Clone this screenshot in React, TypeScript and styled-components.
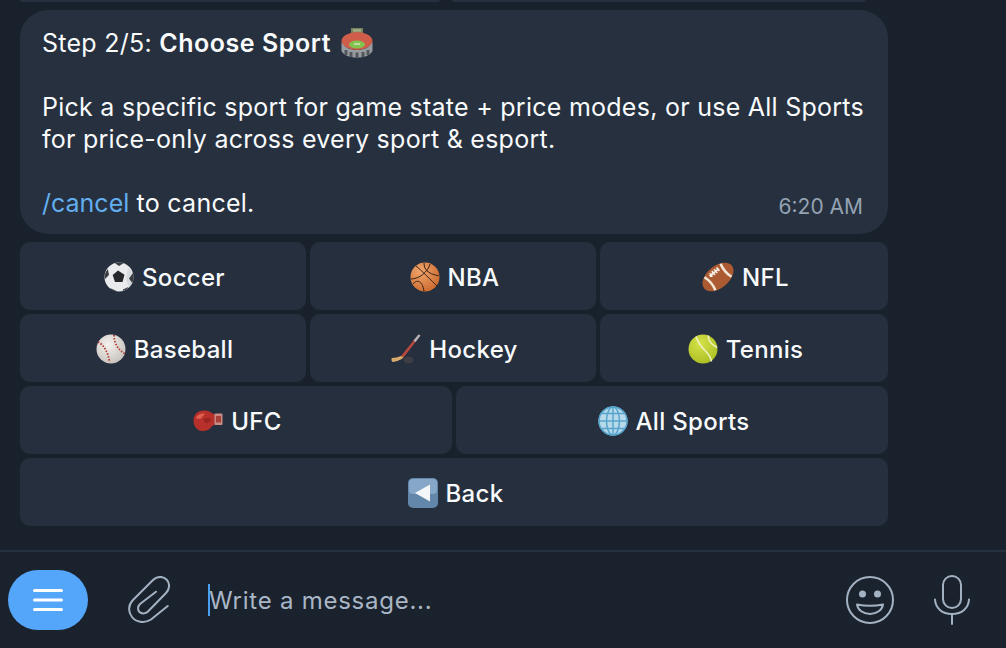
import React from "react";
import styled, { createGlobalStyle } from "styled-components";

const Global = createGlobalStyle`
  html, body { margin: 0; padding: 0; background: #19212c; }
  body { width: 1006px; height: 648px; overflow: hidden; font-family: Inter, "Liberation Sans", sans-serif; }
`;

const Page = styled.div`
  width: 1006px; height: 648px; display: flex; flex-direction: column; background: #19212c; overflow: hidden;
`;
const Chat = styled.div`
  flex: none; width: 868px; margin-left: 20px; height: 550px; display: flex; flex-direction: column; gap: 4px;
`;
const PrevKeys = styled.div`
  height: 2px; display: grid; grid-template-columns: 420px 414px; gap: 12px; margin-bottom: 4px;
`;
const PrevKey = styled.div`
  background: #252f3d; border-radius: 0 0 8px 8px;
`;
const Bubble = styled.div`
  height: 224px; box-sizing: border-box; background: #26303e; border-radius: 28px; padding: 17px 22px 0;
  color: #f8fafc; font-size: 25px; line-height: 32px; letter-spacing: 0.26px; position: relative; margin-bottom: 4px;
`;
const Para = styled.p`
  margin: 0 0 32px; white-space: nowrap;
  &:last-of-type { margin-bottom: 0; }
`;
const Strong = styled.b` font-weight: 600; letter-spacing: 0.55px; `;
const Link = styled.span` color: #62aeee; letter-spacing: 0; `;
const Time = styled.span`
  position: absolute; right: 25px; bottom: 15px; font-size: 21px; line-height: 24px; letter-spacing: 0; color: #94a2b2;
`;
const Row = styled.div<{ $cols: string }>`
  display: grid; grid-template-columns: ${(p) => p.$cols}; gap: 4px; height: 68px;
`;
const Key = styled.div`
  background: #252f3d; border-radius: 10px; display: flex; align-items: center; justify-content: center; gap: 8px;
  color: #f8fafc; font-size: 24px; font-weight: 500; letter-spacing: 0.3px; padding: 2px 0 0 3px; box-sizing: border-box;
`;
const Composer = styled.div`
  flex: none; height: 96px; border-top: 2px solid #263140; background: #1a222d; display: flex; align-items: center; padding-left: 8px;
`;
const MenuBtn = styled.div`
  width: 80px; height: 60px; border-radius: 30px; background: #54a6fb; display: flex; align-items: center; justify-content: center;
`;
const AttachSlot = styled.div`
  width: 120px; box-sizing: border-box; padding-left: 2px; display: flex; justify-content: center; align-items: center;
`;
const Caret = styled.div`
  width: 2px; height: 32px; background: #4a9ef0;
`;
const Placeholder = styled.div`
  flex: 1; font-size: 24px; letter-spacing: 0.75px; color: #a9b6c6; line-height: 32px; margin-left: -1px; padding-top: 2px;
`;
const Tools = styled.div`
  display: flex; align-items: center; gap: 40px; margin-right: 36px;
`;
const EmojiSvg = styled.svg` flex: none; display: block; `;
const InlineEmoji = styled(EmojiSvg)` display: inline-block; vertical-align: -6px; margin-left: 10px; `;

const Soccer = () => (
  <EmojiSvg width="30" height="30" viewBox="0 0 30 30">
    <circle cx="15" cy="15" r="14.500" fill="#e9ebed" />
    <path d="M24 6a14 14 0 0 1 5.500 9 14 14 0 0 1-4.500 10l-3-7z" fill="#b9bdc2" opacity=".35" />
    <path d="M14 8.500l6.500 4.200-2 7.300h-7.500l-2.300-7z" fill="#25272b" />
    <path d="M11 1.200c3-.8 6-.8 8.500 0L15 4zM1 17c-.8-3 .2-7 2.800-10l1.200 6zM29 11c1 3 .8 7-.8 10L25 16.500zM7 26.500l6 2.800c-2.500 0-5-.5-7-2zM19 27.500l5.800-2.800c-1.500 2-3.500 3.600-6 4.300z" fill="#3a3c41" />
  </EmojiSvg>
);
const Basketball = () => (
  <EmojiSvg width="30" height="30" viewBox="0 0 30 30">
    <defs>
      <radialGradient id="bb" cx=".35" cy=".3" r=".8"><stop offset="0" stopColor="#f0a56c" /><stop offset="1" stopColor="#c9672c" /></radialGradient>
    </defs>
    <circle cx="15" cy="15" r="14.500" fill="url(#bb)" />
    <g fill="none" stroke="#3a2418" strokeWidth="1">
      <path d="M1 17C9 17 18 10 20 2M6 4c5 4 17 16 21 20M14 .8c0 6 3 11 15 13M3 22c3-4 9-5 11 7" />
    </g>
  </EmojiSvg>
);
const Football = () => (
  <EmojiSvg width="32" height="30" viewBox="0 0 32 30">
    <g transform="rotate(-40 16 15)">
      <ellipse cx="16" cy="15" rx="18" ry="11" fill="#ab5a32" />
      <path d="M5.500 6.500c1.600 5 1.600 12 0 17" stroke="#f2e6d6" strokeWidth="2.600" fill="none" />
      <path d="M26.500 6.500c-1.600 5-1.600 12 0 17" stroke="#f2e6d6" strokeWidth="2.600" fill="none" />
      <path d="M10 9h12M12 6.800v4.400M15 6.500v5M18 6.500v5M21 6.800v4.400" stroke="#f5efe6" strokeWidth="1.700" fill="none" />
    </g>
  </EmojiSvg>
);
const Baseball = () => (
  <EmojiSvg width="30" height="30" viewBox="0 0 30 30">
    <defs>
      <radialGradient id="base" cx=".4" cy=".35" r=".8"><stop offset="0" stopColor="#f4f2ef" /><stop offset="1" stopColor="#bfb9b2" /></radialGradient>
    </defs>
    <circle cx="15" cy="15" r="14.500" fill="url(#base)" />
    <path d="M2 8c6 3 10 10 11.500 20M18 1c0 8 4 15 11.500 19" fill="none" stroke="#b33a32" strokeWidth="1.800" strokeDasharray="1.500 1.500" />
  </EmojiSvg>
);
const Hockey = () => (
  <EmojiSvg width="30" height="30" viewBox="0 0 30 30">
    <path d="M27.500 .5L29.500 1.500 12.500 23.500l-2.500-1.500z" fill="#b9473f" />
    <path d="M27.500 .5L29.500 1.500 24.500 8l-2-1.500z" fill="#b3b7bc" />
    <path d="M1 24c3 0 6-1 9-2l2.500 1.500c-2 2-6.500 4-10.500 4.500-1.500 0-2-3.500-1-4z" fill="#d8ab6c" />
    <ellipse cx="17.500" cy="26" rx="5" ry="3.500" fill="#3b3e44" />
  </EmojiSvg>
);
const Tennis = () => (
  <EmojiSvg width="30" height="30" viewBox="0 0 30 30">
    <defs>
      <radialGradient id="tn" cx=".4" cy=".3" r=".8"><stop offset="0" stopColor="#d6e24a" /><stop offset="1" stopColor="#a7bc1f" /></radialGradient>
    </defs>
    <circle cx="15" cy="15" r="14.500" fill="url(#tn)" />
    <path d="M8 2.500c2 7 6 11 9 14s6 7 6.500 11M20.500 1.500c-1 3 1 8 8.500 12" fill="none" stroke="#eef0c0" strokeWidth="1.600" />
  </EmojiSvg>
);
const Glove = () => (
  <EmojiSvg width="30" height="22" viewBox="0 0 30 22">
    <path d="M.5 10.500C.5 4.500 5 .5 11 .5c3 0 5 .5 7 2 1.500 1 3 1.500 4 2v10c-1.500.5-3 1.500-4 3-2 2.500-5 4-9 3.500C4 20.500.5 16 .5 10.500z" fill="#b8302c" />
    <path d="M3 8c1-3 5-5 9-4.500-1 2-3 3-4 5-1.500.5-3.500.5-5-.5z" fill="#e0604f" />
    <path d="M11 9c2-1.500 5-1.500 7 .5-1 2.500-3 4-5 3.500-2-.5-3-3-2-4z" fill="#8f1f1f" opacity=".7" />
    <rect x="21.500" y="3.500" width="8" height="11.500" rx="1" fill="#c98a84" />
    <rect x="23" y="6" width="5" height="6.500" fill="#a8403a" />
  </EmojiSvg>
);
const Globe = () => (
  <EmojiSvg width="30" height="30" viewBox="0 0 30 30">
    <circle cx="15" cy="15" r="14.500" fill="#b7d9ea" />
    <g fill="none" stroke="#57a5cd" strokeWidth="1.500">
      <circle cx="15" cy="15" r="14" />
      <ellipse cx="15" cy="15" rx="6.500" ry="14" />
      <path d="M15 1v28M1 15h28M3.500 7.500h23M3.500 22.500h23" />
    </g>
  </EmojiSvg>
);
const BackIcon = () => (
  <EmojiSvg width="30" height="30" viewBox="0 0 30 30">
    <rect width="30" height="30" rx="5" fill="#6387ab" />
    <rect x="1" y="1" width="28" height="15" rx="4" fill="#86a7c7" />
    <path d="M22 6.500v17L7 15z" fill="#f4f6f8" />
  </EmojiSvg>
);
const Stadium = () => (
  <InlineEmoji width="32" height="30" viewBox="0 0 32 30">
    <rect x="10" y="0" width="12" height="5" fill="#77825f" />
    <rect x="12" y="1.200" width="8" height="2.500" fill="#a3ad85" />
    <path d="M3 8c6-4 20-4 26 0v3H3z" fill="#3c4a5e" />
    <ellipse cx="16" cy="13" rx="15.500" ry="9" fill="#cf5d49" />
    <ellipse cx="16" cy="16.500" rx="8" ry="4" fill="#83c44f" />
    <path d="M13 16h6" stroke="#e6f0d8" strokeWidth="1.200" />
    <path d="M.5 14c3 6 9 8 15.500 8s12.500-2 15.500-8v9c-3 5-9 6.500-15.500 6.500S3.500 28 .5 23z" fill="#989ca0" />
    <path d="M5 22v5M10 24v5M16 24.500v5M22 24v5M27 22v5" stroke="#53575c" strokeWidth="3" />
  </InlineEmoji>
);

export default function App() {
  return (
    <Page>
      <Global />
      <Chat>
        <PrevKeys><PrevKey /><PrevKey /></PrevKeys>
        <Bubble>
          <Para>Step 2/5: <Strong>Choose Sport</Strong><Stadium /></Para>
          <Para>Pick a specific sport for game state + price modes, or use All Sports<br />for price-only across every sport &amp; esport.</Para>
          <Para><Link>/cancel</Link> to cancel.</Para>
          <Time>6:20 AM</Time>
        </Bubble>
        <Row $cols="286px 286px 288px">
          <Key><Soccer />Soccer</Key>
          <Key><Basketball />NBA</Key>
          <Key><Football />NFL</Key>
        </Row>
        <Row $cols="286px 286px 288px">
          <Key><Baseball />Baseball</Key>
          <Key><Hockey />Hockey</Key>
          <Key><Tennis />Tennis</Key>
        </Row>
        <Row $cols="432px 432px">
          <Key><Glove />UFC</Key>
          <Key><Globe />All Sports</Key>
        </Row>
        <Row $cols="1fr">
          <Key><BackIcon />Back</Key>
        </Row>
      </Chat>
      <Composer>
        <MenuBtn>
          <svg width="30" height="24" viewBox="0 0 30 24" fill="none" stroke="#fff" strokeWidth="3" strokeLinecap="round">
            <path d="M1.500 2.500h27M1.500 12h27M1.500 21.500h27" />
          </svg>
        </MenuBtn>
        <AttachSlot>
          <svg width="42" height="48" viewBox="0 0 42 48" fill="none" stroke="#a3b2c3" strokeWidth="2" strokeLinecap="round" strokeLinejoin="round">
            <path d="M39.700 30L23 43.500C16 48 8 46 4 41 0 36 0 29 5 24L25 4C29 0 35 0 38.500 3.500 42 7 42 13 38 17L20 35.500C17.500 38 13.500 38 11.500 36 9.500 34 9.500 30.500 12 28L28 15.700" />
          </svg>
        </AttachSlot>
        <Caret />
        <Placeholder>Write a message...</Placeholder>
        <Tools>
          <svg width="48" height="48" viewBox="0 0 48 48" fill="none" stroke="#a3b2c3" strokeWidth="2">
            <circle cx="24" cy="24" r="23" />
            <circle cx="16.500" cy="18" r="3.500" fill="#a3b2c3" stroke="none" />
            <circle cx="31.500" cy="18" r="3.500" fill="#a3b2c3" stroke="none" />
            <path d="M11 28.500c8 1.500 18 1.500 26 0-1 5.500-6 9.500-13 9.500s-12-4-13-9.500z" strokeLinejoin="round" />
          </svg>
          <svg width="36" height="50" viewBox="0 0 36 50" fill="none" stroke="#a3b2c3" strokeWidth="2" strokeLinecap="round">
            <rect x="9" y="1" width="18" height="32" rx="9" />
            <path d="M1 24.500C1.500 33 8 39 18 39s16.500-6 17-14.500M18 39v10" />
          </svg>
        </Tools>
      </Composer>
    </Page>
  );
}
